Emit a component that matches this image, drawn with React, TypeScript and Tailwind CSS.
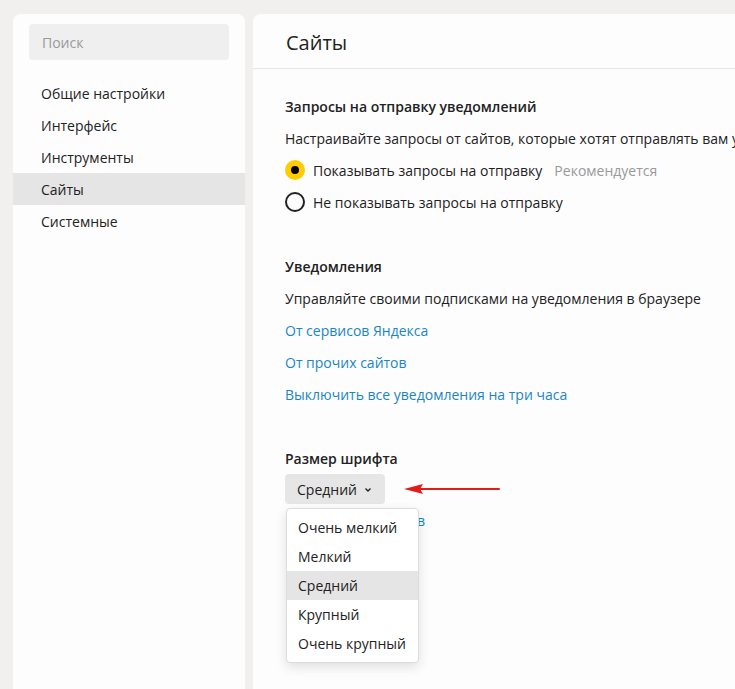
import React from "react";

const font = { fontFamily: '"Open Sans", "Noto Sans", sans-serif' };

function Radio({ checked }: { checked: boolean }) {
  return checked ? (
    <span className="flex h-[20px] w-[20px] items-center justify-center rounded-full bg-[#ffcc00]">
      <span className="h-[8px] w-[8px] rounded-full bg-black" />
    </span>
  ) : (
    <span className="h-[20px] w-[20px] rounded-full border-2 border-[#222]" />
  );
}

export default function App() {
  const navItems = ["Общие настройки", "Интерфейс", "Инструменты", "Сайты", "Системные"];
  const sizes = ["Очень мелкий", "Мелкий", "Средний", "Крупный", "Очень крупный"];
  return (
    <div
      style={font}
      className="flex h-[689px] w-[735px] gap-[8px] overflow-hidden bg-[#f1f0ef] pl-[13px] pt-[14px] text-[14px] text-[#222]"
    >
      {/* Sidebar */}
      <aside className="flex w-[232px] shrink-0 flex-col rounded-t-[8px] bg-[#fdfdfd]">
        <div className="px-[16px] pt-[10px]">
          <div className="flex h-[36px] items-center rounded-[4px] bg-[#efefef] px-[13px] text-[#999]">
            Поиск
          </div>
        </div>
        <nav className="mt-[17px] flex flex-col">
          {navItems.map((n) => (
            <div
              key={n}
              className={`flex h-[32px] items-center px-[28px] ${n === "Сайты" ? "bg-[#e5e5e5]" : ""}`}
            >
              {n}
            </div>
          ))}
        </nav>
      </aside>

      {/* Main */}
      <main className="-mr-[40px] flex min-w-0 flex-1 flex-col rounded-t-[8px] bg-[#fdfdfd] pt-px">
        <div className="flex h-[54px] items-center border-b border-[#e6e6e6] px-[33px] pt-[2px] text-[20px]">
          Сайты
        </div>
        <div className="flex flex-col px-[32px] pt-[21px] whitespace-nowrap">
          <div className="flex h-[32px] items-center font-semibold">Запросы на отправку уведомлений</div>
          <div className="flex h-[32px] items-center">
            Настраивайте запросы от сайтов, которые хотят отправлять вам уведомления
          </div>
          <div className="flex h-[32px] items-center gap-[8px]">
            <Radio checked />
            <span>Показывать запросы на отправку</span>
            <span className="ml-[4px] text-[#999]">Рекомендуется</span>
          </div>
          <div className="flex h-[32px] items-center gap-[8px]">
            <Radio checked={false} />
            <span>Не показывать запросы на отправку</span>
          </div>

          <div className="mt-[32px] flex h-[32px] items-center font-semibold">Уведомления</div>
          <div className="flex h-[32px] items-center">Управляйте своими подписками на уведомления в браузере</div>
          <div className="flex h-[32px] items-center text-[#1a86c2]">От сервисов Яндекса</div>
          <div className="flex h-[32px] items-center text-[#1a86c2]">От прочих сайтов</div>
          <div className="flex h-[32px] items-center text-[#1a86c2]">Выключить все уведомления на три часа</div>

          <div className="mt-[32px] flex h-[32px] items-center font-semibold">Размер шрифта</div>
          <div className="relative">
            <div className="flex items-center gap-[16px]">
              <button className="flex h-[30px] items-center gap-[6px] rounded-[4px] bg-[#e6e6e6] px-[12px]">
                <span>Средний</span>
                <svg width="10" height="10" viewBox="0 0 10 10" className="mt-[2px]">
                  <path d="M2.5 3.5 L5 6 L7.5 3.5" fill="none" stroke="#222" strokeWidth="1.4" />
                </svg>
              </button>
              <svg width="100" height="14" viewBox="0 0 100 14" className="ml-[2px]">
                <line x1="14" y1="7" x2="96" y2="7" stroke="#e21b1b" strokeWidth="2" strokeLinecap="round" />
                <path d="M1 7 L20 2 L17 7 L20 12 Z" fill="#e21b1b" />
              </svg>
            </div>
            <div className="flex h-[32px] items-center text-[#1a86c2]">Настройки шрифтов</div>

            <div className="absolute left-px top-[34px] w-[133px] rounded-[4px] border border-[#dcdcdc] bg-white py-[4px] shadow-[0_4px_12px_rgba(0,0,0,0.12)]">
              {sizes.map((s) => (
                <div
                  key={s}
                  className={`flex h-[29px] items-center px-[11px] ${s === "Средний" ? "bg-[#e5e5e5]" : ""}`}
                >
                  {s}
                </div>
              ))}
            </div>
          </div>
        </div>
      </main>
    </div>
  );
}
